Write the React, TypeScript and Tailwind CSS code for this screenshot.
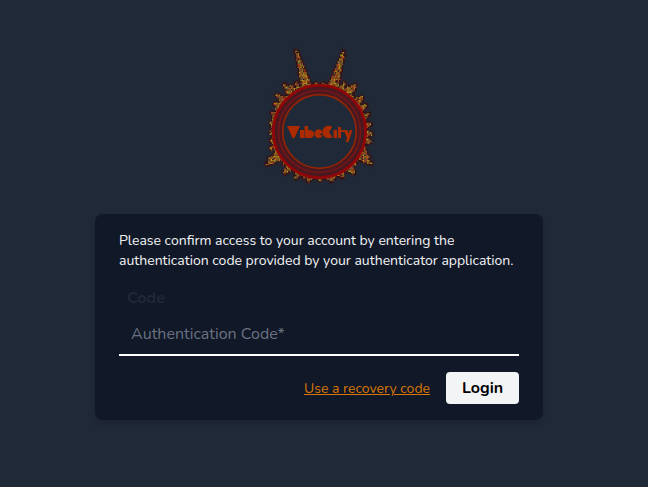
type Spike = [number, number, number];

// tip x, tip y, half width at the base
const spikes: Spike[] = [
  [32, 6, 5.4], [80, 7, 5.4], [20, 40, 5], [92, 40, 5], [27, 41, 4],
  [32, 38, 3], [81, 38, 3], [86, 42, 4], [12, 50, 4], [99, 53, 5], [7, 69, 4], [106, 70, 4],
  [6, 78, 3], [107, 80, 3], [6, 88, 4], [109, 90, 4], [6, 97, 3], [108, 98, 4],
  [6, 105, 4], [2, 121, 4.5], [4, 116, 3.5], [108, 120, 4.5], [106, 114, 4], [20, 130, 4.5], [91, 130, 4.5],
  [31, 135, 3], [79, 134, 3.5], [44, 138, 3.5], [68, 138, 3.5], [56, 137, 3],
  [44, 37, 3], [67, 37, 3], [9, 112, 3.5], [103, 109, 4], [10, 59, 4], [103, 61, 4],
];
const palette = ["#b0381a", "#b5a21a", "#75592c", "#ba6518", "#8a4320", "#9a7e20", "#66583c"];
const cx = 55.5;
const cy = 87.5;
const step = 4 / 3;

function inside(x: number, y: number, grow: number) {
  const dx = x - cx;
  const dy = y - cy;
  const r = Math.hypot(dx, dy);
  if (r < 45) return false;
  const angle = Math.atan2(dy, dx);
  const fringe = 48.3 + 1.2 * Math.sin(angle * 37) + 0.7 * Math.sin(angle * 61);
  if (r < fringe + grow) return true;
  return spikes.some(([tx, ty, w]) => {
    const len = Math.hypot(tx - cx, ty - cy);
    const ux = (tx - cx) / len;
    const uy = (ty - cy) / len;
    const along = dx * ux + dy * uy;
    const across = Math.abs(dx * uy - dy * ux);
    const t = (len - along) / (len - 46);
    return along > 0 && along < len + grow && across < 1.3 + (w - 1.3) * Math.max(t, 0) + grow;
  });
}

const cells: { x: number; y: number; color: string }[] = [];
for (let j = 0; j < 108; j++) {
  for (let i = 0; i < 88; i++) {
    const x = i * step - 1;
    const y = j * step;
    if (!inside(x + 0.67, y + 0.67, 0.9)) continue;
    const n = Math.abs(Math.sin(i * 12.99 + j * 78.23) * 43758.5);
    const core = inside(x + 0.67, y + 0.67, -0.2);
    cells.push({ x, y, color: core && n % 1 > 0.1 ? palette[Math.floor(n) % palette.length] : "#2a1417" });
  }
}

function Logo() {
  return (
    <svg width="114" height="144" viewBox="0 0 114 144" className="ml-1 block overflow-visible" role="img" aria-label="VibeCity">
      <g className="drop-shadow-[0_0_1px_#4a171a]">
        {cells.map((c) => <rect key={`${c.x}-${c.y}`} x={c.x} y={c.y} width="1.34" height="1.34" fill={c.color} />)}
      </g>
      <g fill="none">
        <circle cx={cx} cy={cy} r="41.5" stroke="#49191f" strokeWidth="9" />
        <circle cx={cx} cy={cy} r="46.1" stroke="#8f0508" strokeWidth="2.8" />
        <circle cx={cx} cy={cy} r="41" stroke="#751719" strokeWidth="1.5" />
        <circle cx={cx} cy={cy} r="36.8" stroke="#932406" strokeWidth="1.7" />
      </g>
      <g fill="#aa2b00">
        <path d="M23 82h13l-5.5 12h-2z" />
        <path d="M36 86h4v8h-4z" />
        <path d="M40.5 82h3.5v4c4 0 6 1 6 4s-2 4-4 4h-5.5z" />
        <path d="M50.5 90a4.2 4.2 0 0 1 8.4-1l-4 1.500 4 1c-1.500 3.500-8.400 3.500-8.400-1.500z" />
        <path d="M68.500 83c-5-3-10 0-10 5s5 8 10 5l-3-4v-2z" />
        <path d="M69.500 86h3.500v8h-3.500zM74 83h3v3h3v2h-3v6h-3zM79.500 86h4l1 4 1.200-4h2.800l-4 12h-3l1.500-4z" />
      </g>
    </svg>
  );
}

export default function App() {
  return (
    <main className="flex h-[487px] w-[648px] flex-col items-center bg-[#1f2937] pr-[10px] pt-11 font-['Nunito','Lato',sans-serif]">
      <Logo />
      <section className="mt-[26px] h-[206px] w-[448px] rounded-lg bg-[#111827] px-6 pt-[17px] shadow-md">
        <p className="text-sm leading-5 text-gray-100">
          Please confirm access to your account by entering the authentication code provided by your authenticator application.
        </p>
        <label htmlFor="code" className="mt-[15px] block pl-2 text-base leading-6 font-bold text-[#1f2937]">Code</label>
        <input id="code" placeholder="Authentication Code*" className="block h-[46px] w-full border-b-2 border-white bg-transparent px-3 pt-1 text-base text-white outline-none placeholder:text-gray-500" />
        <div className="mt-4 flex items-center justify-end gap-4">
          <a href="#" className="pt-0.5 text-sm text-[#d97706] underline">Use a recovery code</a>
          <button className="h-8 w-[73px] rounded bg-gray-100 text-base font-bold text-black">Login</button>
        </div>
      </section>
    </main>
  );
}
